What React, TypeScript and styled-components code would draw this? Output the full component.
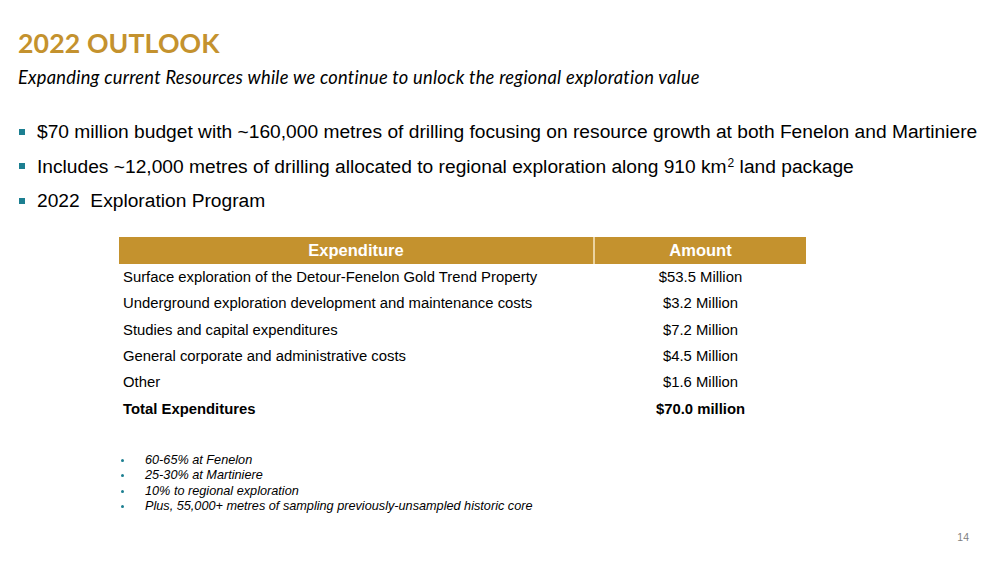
import React from "react";
import styled, { createGlobalStyle } from "styled-components";

const Global = createGlobalStyle`
  html, body { margin: 0; padding: 0; background: #fff; }
  body { width: 998px; height: 562px; overflow: hidden; }
`;

const Slide = styled.div`
  position: relative;
  width: 998px;
  height: 562px;
  box-sizing: border-box;
  padding: 26px 0 0 18px;
  background: #fff;
  color: #000;
  display: flex;
  flex-direction: column;
`;

const Title = styled.h1`
  margin: 0;
  font-family: Lato, "Open Sans", sans-serif;
  font-weight: 700;
  font-size: 26.7px;
  line-height: 34px;
  color: #C4922E;
  letter-spacing: 0.1px;
`;

const Subtitle = styled.p`
  margin: 6px 0 0;
  font-family: Lato, "Open Sans", sans-serif;
  font-style: italic;
  font-size: 18.3px;
  line-height: 22px;
  letter-spacing: 0.25px;
`;

const BulletList = styled.ul`
  list-style: none;
  margin: 31px 0 0;
  padding: 0;
  display: flex;
  flex-direction: column;
  gap: 9.5px;
`;

const Bullet = styled.li`
  display: flex;
  align-items: center;
  gap: 12px;
  font-family: "Liberation Sans", Arial, sans-serif;
  font-size: 19.2px;
  line-height: 25px;
  &::before {
    content: "";
    width: 6px;
    height: 6px;
    background: #1C7F91;
    flex: none;
    margin-left: 1px;
  }
  sup { font-size: 12px; line-height: 0; position: relative; top: 2px; margin-left: 1px; }
`;

const Table = styled.div`
  margin: 24px 0 0 101px;
  width: 687px;
  font-family: "Liberation Sans", Arial, sans-serif;
  font-size: 14.85px;
`;

const HeaderRow = styled.div`
  display: grid;
  grid-template-columns: 474px 1fr;
  height: 27px;
  background: #C4922E;
  column-gap: 2px;
`;

const HeaderCell = styled.div`
  background: #C4922E;
  color: #fff;
  font-weight: 700;
  font-size: 16.5px;
  display: flex;
  align-items: center;
  justify-content: center;
  & + & { box-shadow: -2px 0 0 #EBD3A0; }
`;

const Row = styled.div<{ $bold?: boolean }>`
  display: grid;
  grid-template-columns: 474px 1fr;
  column-gap: 2px;
  height: 26.3px;
  align-items: center;
  font-weight: ${(p) => (p.$bold ? 700 : 400)};
  &:first-of-type { margin-top: 3px; }
`;

const Label = styled.div`
  padding-left: 4px;
`;

const Amount = styled.div`
  text-align: center;
`;

const Notes = styled.ul`
  list-style: none;
  margin: 31px 0 0 103px;
  padding: 0;
  font-family: "Liberation Sans", Arial, sans-serif;
  font-style: italic;
  font-size: 12.7px;
  line-height: 15.4px;
`;

const Note = styled.li`
  display: flex;
  align-items: center;
  &::before {
    content: "";
    width: 3px;
    height: 3px;
    border-radius: 50%;
    background: #1C7F91;
    margin-right: 21px;
    flex: none;
  }
`;

const PageNum = styled.div`
  position: absolute;
  right: 29px;
  bottom: 19px;
  font-family: "Liberation Sans", Arial, sans-serif;
  font-size: 10.5px;
  color: #7F7F7F;
`;

const rows = [
  ["Surface exploration of the Detour-Fenelon Gold Trend Property", "$53.5 Million"],
  ["Underground exploration development and maintenance costs", "$3.2 Million"],
  ["Studies and capital expenditures", "$7.2 Million"],
  ["General corporate and administrative costs", "$4.5 Million"],
  ["Other", "$1.6 Million"],
];

export default function App() {
  return (
    <Slide>
      <Global />
      <Title>2022 OUTLOOK</Title>
      <Subtitle>Expanding current Resources while we continue to unlock the regional exploration value</Subtitle>
      <BulletList>
        <Bullet>$70 million budget with ~160,000 metres of drilling focusing on resource growth at both Fenelon and Martiniere</Bullet>
        <Bullet>
          <span>Includes ~12,000 metres of drilling allocated to regional exploration along 910 km<sup>2</sup> land package</span>
        </Bullet>
        <Bullet>2022&nbsp; Exploration Program</Bullet>
      </BulletList>
      <Table>
        <HeaderRow>
          <HeaderCell>Expenditure</HeaderCell>
          <HeaderCell>Amount</HeaderCell>
        </HeaderRow>
        {rows.map(([l, a]) => (
          <Row key={l}>
            <Label>{l}</Label>
            <Amount>{a}</Amount>
          </Row>
        ))}
        <Row $bold>
          <Label>Total Expenditures</Label>
          <Amount>$70.0 million</Amount>
        </Row>
      </Table>
      <Notes>
        <Note>60-65% at Fenelon</Note>
        <Note>25-30% at Martiniere</Note>
        <Note>10% to regional exploration</Note>
        <Note>Plus, 55,000+ metres of sampling previously-unsampled historic core</Note>
      </Notes>
      <PageNum>14</PageNum>
    </Slide>
  );
}
